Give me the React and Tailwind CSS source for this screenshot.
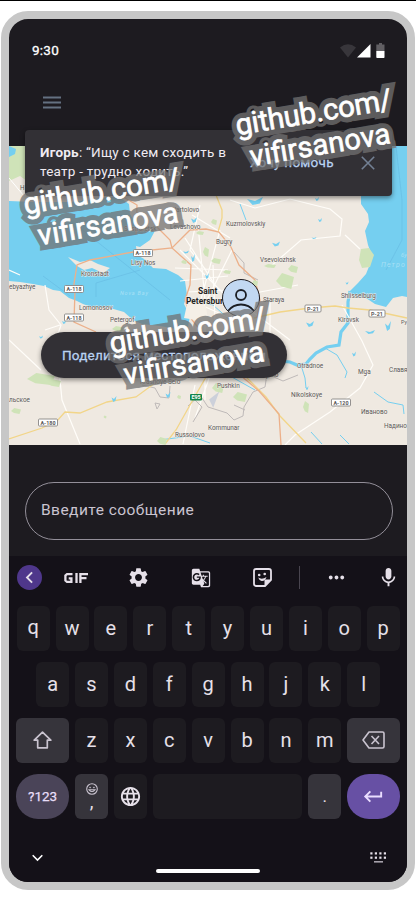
import React from "react";
import {
  MdSettings,
  MdGTranslate,
  MdMic,
  MdMoreHoriz,
  MdChevronLeft,
  MdLanguage,
  MdKeyboardReturn,
} from "react-icons/md";

const towns = [
  ["ebyazhye", 9, 289],
  ["Kronstadt", 81, 276],
  ["Lisy Nos", 131, 265],
  ["Lomonosov", 79, 310],
  ["Petergof", 110, 322],
  ["Sestroretsk", 124, 231],
  ["Vartolovo", 172, 212],
  ["Levashovo", 170, 229],
  ["Kuzmolovskiy", 226, 226],
  ["Bugry", 216, 243.5],
  ["Vsevolozhsk", 260, 262],
  ["Staraya", 263, 302],
  ["Shlisselburg", 341, 297.5],
  ["Kirovsk", 338, 322],
  ["Otradnoe", 297, 367.5],
  ["Mga", 358, 374],
  ["Славя", 389, 372],
  ["Nikolskoye", 291, 396.5],
  ["Иваново", 361, 414],
  ["Надино", 384, 428],
  ["Kolpino", 257, 377],
  ["Pushkin", 217, 388],
  ["Kommunar", 208, 430],
  ["Russolovo", 175, 437],
  ["льское", 9, 402],
  ["Krasnoye Selo", 140, 383.5],
  ["Ру", 401, 324],
  ["Н", 20, 190],
];

const shields = [
  ["A-118", 143, 253],
  ["A-118", 74, 289],
  ["A-118", 74, 317.5],
  ["A-180", 48, 422.5],
  ["A-120", 341, 402.5],
  ["P-21", 313, 308.5],
  ["P-21", 377, 313.5],
];

const ponds = [
  [276, 244, 4, 2.5], [255, 201, 8, 4], [320, 220, 2, 2], [314, 238, 2.5, 1], [310, 324, 4, 3],
  [370, 332, 5, 2], [388, 326, 3, 5], [354, 354, 2, 2.5], [114, 399, 2.5, 3], [317, 199, 2, 2],
  [307, 388, 1.5, 2], [186, 252, 3, 1.5], [194, 220, 3, 3], [168, 395, 2.5, 3], [64, 322, 2, 2],
  [207, 276, 2, 3], [41, 337, 2, 1.5], [193, 258, 2, 4], [347, 283, 1.5, 1.5],
];

const parks = [
  [41, 379, 14, 6], [54, 383, 7, 4], [16, 411, 5, 3], [118, 329, 6, 3], [285, 281, 9, 8],
  [293, 269, 5, 4], [218, 388, 6, 5], [240, 397, 7, 5], [162, 441, 5, 4], [306, 407, 3, 6],
  [216, 261, 5, 3], [206, 252, 3, 5], [179, 397, 2, 2], [214, 222, 3, 3], [105, 417, 1.5, 1.5],
  [227, 272, 4, 2], [200, 233, 4, 2], [255, 283, 3, 3], [184, 262, 3, 2], [270, 266, 6, 2],
];

function CityMap() {
  return (
    <svg viewBox="9 146 398 299" className="block h-[299px] w-[398px]">
      <rect x="9" y="146" width="398" height="299" fill="#efe9e1" />
      <path d="M9 146H60L45 170L35 187L20 176L9 181Z" fill="#cfe3b8" />
      <path d="M9 146L16 149L15 154L9 157Z" fill="#75cff0" />
      <path d="M9 178L24 196" stroke="#fff" fill="none" />
      <path d="M9 201L34 202L70 202L118 196L129 204L130 214L136 224L140 231L156 229L150 240L140 247L136 246L137 255L146 260L153 268L166 269L178 275L185 281L187 295L184 304L190 316L188 327L176 329L160 326L142 324L133 320L124 312L110 308L94 308L83 304L77 301L69 298L60 291L53 290L44 286L33 284L20 282L9 281Z" fill="#75cff0" />
      <path d="M43 276L70 296M96 297L96 283L140 270M70 220L170 300" stroke="#68bde4" strokeWidth=".7" fill="none" />
      <path d="M68 257L80 262L90 260L98 264L110 268L103 273L92 268L84 270L77 266Z" fill="#efe9e1" />
      <path d="M361 194L361 204L368 214L369 222L365 231L368 245L371 253L370 264L366 274L358 283L350 291L353 297L366 298L375 304L386 307L393 298L402 296L407 297V146H391L384 194Z" fill="#75cff0" />
      <path d="M396 146L402 200V240L386 270" stroke="#68bde4" strokeWidth=".7" fill="none" />
      <path d="M361 249L369 248L374 255L370 267L362 268L359 260Z" fill="#cfe3b8" />
      <path d="M350 291L348 302L348 323L341 332L339 345L327 347L316 353L310 359L306 364L297 365L290 362L280 361" stroke="#75cff0" strokeWidth="3.2" fill="none" />
      <path d="M301 365L305 378L306 388M187 297L197 301L213 305L230 320M325 348L337 355L347 372L345 378M205 362L255 390M374 392L388 402L403 405L404 414M340 435L349 444M311 432L322 444M160 440L190 436L210 443M240 204L246 220" stroke="#75cff0" strokeWidth="1" fill="none" />
      <g stroke="#fffdf9" strokeWidth="1.2" fill="none">
        <path d="M45 285L49 310L61 325L56 340L62 400L80 444M9 270L20 275M230 200L255 208L290 199L330 209L342 219L340 236L301 240L270 267M345 235L360 249M342 305L362 341L373 365L360 388L330 412L295 435L285 445M9 340L41 370M180 250L225 295M175 268L228 270M180 281L228 276M187 292L230 290M198 225L205 300M220 230L198 310M232 250L198 318M180 335L240 345M60 325L45 330M205 320L205 400M240 298L260 292L298 285M250 310L290 340M270 300V340M212 370L195 418" />
        <path d="M185 238L215 285M192 215L230 238M200 205L190 250L206 270M213 265L215 320M190 300L230 318M195 385L183 444" />
      </g>
      <g stroke="#bfbab9" strokeWidth="1" fill="none">
        <path d="M234 252L244 263L244 273L258 280M142 385L155 388L160 397L169 398L170 386M190 395L202 407L193 422M188 406L200 395L208 407L227 413L234 420L243 416L244 407L253 392L265 387L267 374L283 381L298 375M245 410L234 405M155 403L160 404L157 409Z" />
      </g>
      <g fill="none" strokeWidth="1.3" stroke="#f2d588">
        <path d="M9 439L42 428L57 421L65 412L80 413L107 402L136 397L155 383M216 195L222 210L222 218L218 232M254 318L280 312L310 308L335 306L348 308L370 310L407 318M246 377L266 397L280 416L306 443M165 444L176 430L190 405L206 377" />
      </g>
      <g fill="none" strokeWidth="1.3" stroke="#ecb08a">
        <path d="M73 290L77 265L90 260L133 252L172 248L190 230L206 229L219 232L231 247L239 265L255 280L260 300L257 318M120 195L137 205L136 237M155 225L170 240L172 248L191 265L190 285L185 300L192 320L206 337L240 375L259 391L279 414L281 445M75 290L74 322L96 332" />
      </g>
      <g fill="#cfe3b8">
        {parks.map(([x, y, w, h], i) => (
          <path key={i} d={`M${x - w} ${y}L${x - w / 3} ${y - h}L${x + w} ${y - h / 2}L${x + w * 0.7} ${y + h}L${x - w * 0.4} ${y + h * 0.7}Z`} />
        ))}
      </g>
      <g fill="#75cff0">
        {ponds.map(([x, y, w, h], i) => (
          <path key={i} d={`M${x - w} ${y - h / 2}L${x} ${y}L${x + w} ${y - h}L${x + w * 0.6} ${y + h * 0.6}L${x - w * 0.3} ${y + h}Z`} />
        ))}
        <path d="M131 236L145 230L150 236L143 244L138 246Z" />
      </g>
      <path d="M211 400L216 396L213 404Z" fill="#ccd0da" stroke="#ccd0da" strokeWidth="3" />
      <path d="M184 318L188 300L206 306L208 322Z" fill="#f5efe7" />
      <g fontFamily="Roboto, sans-serif" fontSize="6.4" fill="#5a5756" stroke="#f4f0ea" strokeWidth=".8" paintOrder="stroke">
        {towns.map(([name, x, y]) => (
          <text key={name} x={x} y={y} fontSize={x > 400 ? 5.4 : 6.4}>{name}</text>
        ))}
      </g>
      <g fontFamily="Roboto, sans-serif" fontStyle="italic" fill="#a7e0f5" letterSpacing=".8">
        <text x="120" y="295" fontSize="5.5">Nova Bay</text>
        <text x="381" y="267" fontSize="7" letterSpacing="1.1">Петро</text>
        <text x="401" y="257" fontSize="6" letterSpacing="0">бу</text>
      </g>
      <g fontFamily="Roboto, sans-serif" fontSize="5.4" fontWeight="700" textAnchor="middle" fill="#5a5756">
        {shields.map(([name, x, y], i) => (
          <g key={i}>
            <rect x={x - (name.length > 4 ? 9.5 : 8)} y={y - 3.5} width={name.length > 4 ? 19 : 16} height="7" rx="1" fill="#fff" stroke="#888684" strokeWidth=".9" />
            <text x={x} y={y + 2}>{name}</text>
          </g>
        ))}
        <rect x="190" y="394" width="12" height="6.5" rx="1" fill="#14864b" />
        <text x="196" y="399.2" fill="#fff">E95</text>
      </g>
      <g fontFamily="Roboto, sans-serif" fontSize="8.4" fontWeight="700" fill="#252423" stroke="#f6f2ec" strokeWidth="1.2" paintOrder="stroke">
        <text x="198" y="293.5">Saint</text>
        <text x="186" y="303.5">Petersburg</text>
      </g>
    </svg>
  );
}

function Watermark({ id, className }) {
  return (
    <svg className={"pointer-events-none absolute overflow-visible " + className} width="170" height="90" viewBox="0 0 170 90">
      <use href={"#" + id} fill="none" stroke="#727272" strokeWidth="11" opacity=".74" />
      <g fill="#fff" stroke="#fff" strokeWidth=".7">
        <text id={id} transform="rotate(-9.5 85 45)" textAnchor="middle" fontFamily="Roboto, sans-serif" fontSize="29">
          <tspan x="85" y="34" fontSize="29.5" textLength="158">github.com/</tspan>
          <tspan x="86" y="67" textLength="142">vifirsanova</tspan>
        </text>
      </g>
    </svg>
  );
}

function Key({ children, className = "w-[33px] bg-[#1d1b20]" }) {
  return (
    <div className={"flex h-[44.5px] shrink-0 items-center justify-center rounded-[6px] text-[#e6e0e9] " + className}>
      {children}
    </div>
  );
}

function Letters({ row }) {
  return row.split("").map((c) => (
    <Key key={c}>
      <span className={c === "q" ? "pb-[2px] text-[20px] leading-none" : "text-[20px] leading-none"}>{c}</span>
    </Key>
  ));
}

export default function App() {
  return (
    <div className="h-[902px] w-[416px] overflow-hidden border-t border-black bg-white pt-[10px] pl-px font-[Roboto,sans-serif]">
      <div className="relative h-[879px] w-[414px] rounded-[27px] border-8 border-[#c7c7c7] bg-[#1d1b20]">
        <div className="flex h-full w-full flex-col overflow-hidden rounded-[19px]">
          <header className="flex h-[62px] shrink-0 items-center justify-between pr-[22px] pl-[23px]">
            <span className="text-[13.5px] tracking-[0.25px] text-white [-webkit-text-stroke:0.3px]">9:30</span>
            <svg width="46" height="16" viewBox="339 43 46 16" fill="#fff">
              <path d="M340 48.5Q348 42 356 48.5L348 58.5Z" opacity=".12" />
              <path d="M370.5 45V58.5H357Z" />
              <path d="M379 44H382V45.5H384.5V52H376.3V45.5H379Z" opacity=".3" />
              <path d="M376.3 52H384.5V58.2Q384.5 59 383.7 59H377.1Q376.3 59 376.3 58.2Z" />
            </svg>
          </header>
          <div className="flex h-[65px] shrink-0 items-start pt-[15px] pl-[34px]">
            <svg width="18" height="13" viewBox="0 0 18 13" stroke="#647181" strokeWidth="2">
              <path d="M0 1.5H18M0 6.5H18M0 11.5H18" />
            </svg>
          </div>

          <main className="relative h-[299px] shrink-0">
            <CityMap />
            <section className="absolute -top-4 left-[15.5px] flex h-[65.5px] w-[367.5px] items-center rounded-[4px] bg-[#323035] pl-[15.5px] shadow-[0_2px_5px_rgba(0,0,0,0.45)]">
              <p className="w-[210px] pb-[2px] text-[13.5px] leading-[19px] tracking-[0.25px] whitespace-nowrap text-[#f0ebf2]">
                <b>Игорь</b>: “Ищу с кем сходить в<br />театр - трудно ходить.”
              </p>
              <span className="w-[111px] pb-[2px] text-[13.5px] tracking-[0.25px] whitespace-nowrap text-[#b9d2f2] [-webkit-text-stroke:0.3px]">Хочу помочь</span>
              <svg width="14" height="14" viewBox="0 0 14 14" stroke="#738094" strokeWidth="1.6">
                <path d="M.8.8L13.2 13.2M13.2.8L.8 13.2" />
              </svg>
            </section>
            <div className="absolute top-[132.5px] left-[213px] h-[38px] w-[38px] overflow-hidden rounded-full border border-[#1d1b20] bg-[#c2d8f2]">
              <svg width="36" height="36" viewBox="0 0 36 36" fill="none" stroke="#1b1e24" strokeWidth="1.8">
                <circle cx="18" cy="15" r="5" />
                <path d="M5 31Q10 24.5 18 24.5T31 31" />
              </svg>
            </div>
            <button className="absolute top-[186px] left-[32px] flex h-[46px] w-[246px] items-center justify-center rounded-full bg-[#323035] text-[13.5px] tracking-[0.22px] whitespace-nowrap text-[#b9d2f2] shadow-[0_2px_5px_rgba(0,0,0,0.45)] [-webkit-text-stroke:0.3px]">
              Поделиться местоположением
            </button>
          </main>

          <div className="h-[111px] shrink-0 pt-[37px] pr-[14px] pl-4">
            <div className="flex h-[58px] items-center rounded-full border border-[#938f99] pl-[15px] text-[15.5px] tracking-[0.46px] text-[#cac4d0]">
              Введите сообщение
            </div>
          </div>

          <footer className="flex grow flex-col bg-[#141118] text-[#e6e0e9]">
            <div className="flex h-[43px] shrink-0 items-center pl-[7.5px]">
              <div className="flex h-[25px] w-[25px] items-center justify-center rounded-full bg-[#4f378b]">
                <MdChevronLeft size={23} />
              </div>
              <div className="ml-[4px] flex w-[62px] justify-center text-[#e6e0e9]">
                <svg width="25" height="12" viewBox="0 0 25 12" fill="none" stroke="currentColor" strokeWidth="2.3">
                  <path d="M8.5 2.1H3L1.4 3.5V8.5L3 9.9H7.4V6.3H4.7M12.5 1V11M16.4 11V2.1H24M16.4 6.2H22.5" />
                </svg>
              </div>
              <div className="flex w-[62px] justify-center"><MdSettings size={23} /></div>
              <div className="flex w-[62px] justify-center"><MdGTranslate size={20} /></div>
              <div className="flex w-[62px] justify-center">
                <svg width="19" height="19" viewBox="0 0 19 19" fill="none" stroke="currentColor" strokeWidth="1.8">
                  <path d="M18 12V3.2Q18 1 15.8 1H3.2Q1 1 1 3.2V15.8Q1 18 3.2 18H12Z" />
                  <path d="M12 18V12H18Z" fill="currentColor" strokeWidth="1" />
                  <path d="M5.2 9.5Q9 12 13.5 9Q12 13.5 8.5 13Q6.2 12.5 5.2 9.5Z" fill="currentColor" stroke="none" />
                  <circle cx="6.2" cy="7" r="1.3" fill="currentColor" stroke="none" />
                  <circle cx="11.7" cy="6" r="1.3" fill="currentColor" stroke="none" />
                </svg>
              </div>
              <div className="flex w-[12px] justify-center"><div className="h-[23px] w-px bg-[#49454f]" /></div>
              <div className="flex w-[61px] justify-center"><MdMoreHoriz size={23} /></div>
              <div className="flex grow justify-center pl-[3px]"><MdMic size={23} /></div>
            </div>

            <div className="flex flex-col gap-[11.6px] pt-[7px] pl-[0.3px]">
              <div className="flex justify-center gap-[5.9px]"><Letters row="qwertyuiop" /></div>
              <div className="flex justify-center gap-[5.9px]"><Letters row="asdfghjkl" /></div>
              <div className="flex justify-center gap-[5.9px]">
                <Key className="w-[53px] bg-[#36343b]">
                  <svg width="19" height="18" viewBox="0 0 19 18" fill="none" stroke="#cac4d0" strokeWidth="1.7">
                    <path d="M9.5 1.2L1.2 9.2H4.7V16.8H14.3V9.2H17.8Z" strokeLinejoin="round" />
                  </svg>
                </Key>
                <Letters row="zxcvbnm" />
                <Key className="w-[53px] bg-[#36343b]">
                  <svg width="23" height="18" viewBox="0 0 23 18" fill="none" stroke="#cac4d0" strokeWidth="1.6">
                    <path d="M7 1H20.5Q22 1 22 2.5V15.5Q22 17 20.5 17H7L1 9Z" strokeLinejoin="round" />
                    <path d="M9.5 5L17 13M17 5L9.5 13" />
                  </svg>
                </Key>
              </div>
              <div className="flex justify-center gap-[5.9px]">
                <Key className="w-[53px] rounded-[22px] bg-[#4a4458]">
                  <span className="text-[13.5px] text-[#e8def8] [-webkit-text-stroke:0.25px]">?123</span>
                </Key>
                <Key className="w-[33px] flex-col bg-[#36343b]">
                  <svg width="12" height="12" viewBox="0 0 12 12" fill="none" stroke="#cac4d0" strokeWidth="1.1">
                    <circle cx="6" cy="6" r="5.3" />
                    <path d="M3.1 6.8Q6 10.3 8.9 6.8Z" />
                    <circle cx="4.1" cy="4.5" r=".5" fill="#cac4d0" strokeWidth=".6" />
                    <circle cx="7.9" cy="4.5" r=".5" fill="#cac4d0" strokeWidth=".6" />
                  </svg>
                  <span className="h-[15px] text-[19px] leading-[13px]">,</span>
                </Key>
                <Key><MdLanguage size={23} /></Key>
                <Key className="w-[149.6px] bg-[#1d1b20]" />
                <Key className="w-[33px] bg-[#36343b]"><span className="text-[17px]">.</span></Key>
                <Key className="w-[53px] rounded-[22px] bg-[#6750a4] text-[#eaddff]"><MdKeyboardReturn size={23} /></Key>
              </div>
            </div>

            <div className="flex grow items-center justify-between pt-[15px] pr-[20px] pl-[23px]">
              <svg width="11" height="8" viewBox="0 0 11 8" fill="none" stroke="#fff" strokeWidth="1.6">
                <path d="M.7 1.2L5.5 6L10.3 1.2" />
              </svg>
              <div className="mt-[27px] h-1 w-[104px] translate-x-[1px] rounded-full bg-white" />
              <svg width="17" height="11" viewBox="0 0 17 11" fill="#e6e0e9">
                {[0, 4.5, 9, 13.5].map((x) => (
                  <g key={x}>
                    <rect x={x + 0.3} y=".3" width="2.2" height="2.2" />
                    <rect x={x + 0.3} y="4.6" width="2.2" height="2.2" />
                  </g>
                ))}
                <rect x="4" y="9" width="9" height="1.6" opacity=".7" />
              </svg>
            </div>
          </footer>
        </div>
        <Watermark id="mark-top" className="top-[69px] left-[223px]" />
        <Watermark id="mark-left" className="top-[148px] left-[11px]" />
        <Watermark id="mark-center" className="top-[287px] left-[97px]" />
      </div>
    </div>
  );
}
